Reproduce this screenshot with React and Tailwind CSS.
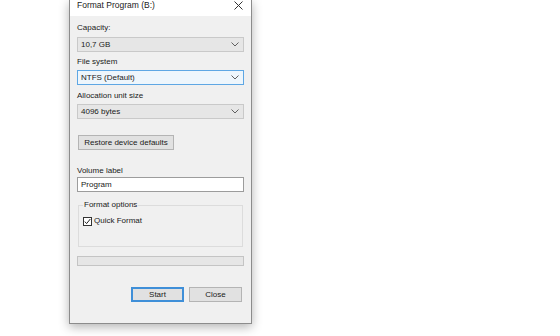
import React from "react";

const Chevron = () => (
  <svg width="8" height="5" viewBox="0 0 8 5" className="shrink-0">
    <polyline points="0.5,0.5 4,4 7.5,0.5" fill="none" stroke="#606060" strokeWidth="1" />
  </svg>
);

const Combo = ({ value, focused }) => (
  <div
    className={
      focused
        ? "flex h-[15px] items-center justify-between border border-[#5ea7e4] bg-[#eef6fc] pl-[3px] pr-[4px]"
        : "flex h-[15px] items-center justify-between border border-[#c9c9c9] bg-[#e6e6e6] pl-[3px] pr-[4px]"
    }
  >
    <span className="text-[8px] leading-[10px]">{value}</span>
    <Chevron />
  </div>
);

const Label = ({ children, className = "" }) => (
  <div className={"text-[8px] leading-[10px] " + className}>{children}</div>
);

export default function App() {
  return (
    <div className="min-h-[336px] w-[560px] bg-white font-['Liberation_Sans',Arial,sans-serif] text-[#1a1a1a]">
      <div className="ml-[69px] w-[183px] border-x border-b border-[#8c8c8c] bg-[#f0f0f0] shadow-[0_3px_10px_rgba(0,0,0,0.3)]">
        {/* title bar */}
        <div className="flex h-[16px] items-start justify-between bg-white pl-[7px] pr-[8px]">
          <span className="text-[8.5px] leading-[10px]">Format Program (B:)</span>
          <svg width="9" height="9" viewBox="0 0 9 9" className="mt-[1px]">
            <path d="M0.5 0.5 L8.5 8.5 M8.5 0.5 L0.5 8.5" stroke="#333" strokeWidth="1" />
          </svg>
        </div>

        <div className="flex flex-col px-[7px] pb-[21px]">
          <Label className="mt-[7px]">Capacity:</Label>
          <div className="mt-[4px]">
            <Combo value="10,7 GB" />
          </div>

          <Label className="mt-[5px]">File system</Label>
          <div className="mt-[3px]">
            <Combo value="NTFS (Default)" focused />
          </div>

          <Label className="mt-[6px]">Allocation unit size</Label>
          <div className="mt-[3px]">
            <Combo value="4096 bytes" />
          </div>

          <div className="mt-[16px] flex">
            <button className="ml-[1px] h-[15px] w-[96px] border border-[#b4b4b4] bg-[#e1e1e1] text-[8px] leading-[10px]">
              Restore device defaults
            </button>
          </div>

          <Label className="mt-[16px]">Volume label</Label>
          <div className="mt-[1px] flex h-[15px] items-center border border-[#9c9c9c] bg-white pl-[3px]">
            <span className="text-[8px] leading-[10px]">Program</span>
          </div>

          <fieldset className="mx-[1px] mt-[8px] border border-[#dcdcdc] pb-[20px] pl-[4px]">
            <legend className="px-[1px] text-[8px] leading-[10px]">Format options</legend>
            <div className="mt-[6px] flex items-center gap-[2px]">
              <svg width="9" height="9" viewBox="0 0 9 9">
                <rect x="0.5" y="0.5" width="8" height="8" fill="white" stroke="#333" />
                <polyline points="1.8,4.6 3.6,6.6 7.3,2" fill="none" stroke="#222" strokeWidth="1" />
              </svg>
              <span className="text-[8px] leading-[10px]">Quick Format</span>
            </div>
          </fieldset>

          <div className="mt-[9px] h-[10px] border border-[#c4c4c4] bg-[#e6e6e6]" />

          <div className="mt-[21px] mr-[2px] flex justify-end gap-[5px]">
            <button className="h-[15px] w-[53px] border-2 border-[#3f8fd8] bg-[#e1e1e1] text-[8px] leading-[10px]">
              Start
            </button>
            <button className="h-[15px] w-[53px] border border-[#b4b4b4] bg-[#e1e1e1] text-[8px] leading-[10px]">
              Close
            </button>
          </div>
        </div>
      </div>
    </div>
  );
}
